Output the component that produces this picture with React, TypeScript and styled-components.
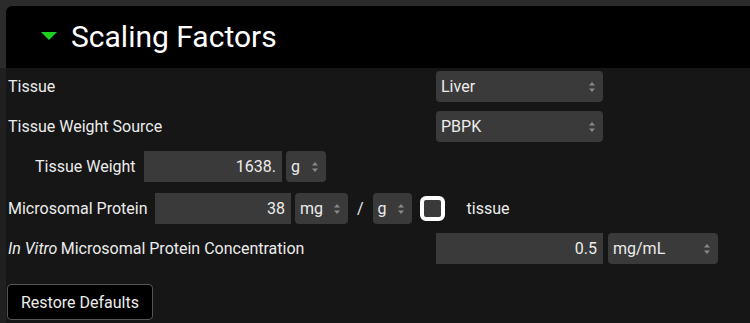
import styled, { createGlobalStyle } from 'styled-components';

const GlobalStyle = createGlobalStyle`
  html, body {
    margin: 0;
    padding: 0;
    background: linear-gradient(#2b2b2b 0, #2b2b2b 68px, #202020 68px) no-repeat;
    background-color: #202020;
    min-height: 323px;
    font-family: Roboto, "Liberation Sans", sans-serif;
  }
`;

function Spinner() {
  return (
    <svg width="8" height="14" viewBox="0 0 8 14">
      <path d="M4 2 L7 5.5 H1 Z" fill="#8a8a8a" />
      <path d="M4 12 L7 8.5 H1 Z" fill="#8a8a8a" />
    </svg>
  );
}

function Select({ value, width }: { value: string; width: number }) {
  return (
    <SelectBox $width={width}>
      <span>{value}</span>
      <Spinner />
    </SelectBox>
  );
}

function App() {
  return (
    <>
      <GlobalStyle />
      <Panel>
        <Header>
          <Caret />
          <Title>Scaling Factors</Title>
        </Header>
        <Body>
          <Row>
            <Label $width={428}>Tissue</Label>
            <Select value="Liver" width={167} />
          </Row>
          <Row>
            <Label $width={428}>Tissue Weight Source</Label>
            <Select value="PBPK" width={167} />
          </Row>
          <Row $indent={27}>
            <Label $width={109}>Tissue Weight</Label>
            <NumberBox $width={138}>1638.</NumberBox>
            <Select value="g" width={40} />
          </Row>
          <Row $top={2}>
            <Label $width={147}>Microsomal Protein</Label>
            <NumberBox $width={136}>38</NumberBox>
            <Select value="mg" width={53} />
            <Slash>/</Slash>
            <Select value="g" width={39} />
            <Check />
            <Suffix>tissue</Suffix>
          </Row>
          <Row>
            <Label $width={428}>
              <em>In Vitro</em>&#8201;Microsomal Protein Concentration
            </Label>
            <NumberBox $width={167} $gap={5}>0.5</NumberBox>
            <Select value="mg/mL" width={110} />
          </Row>
          <RestoreButton>Restore Defaults</RestoreButton>
        </Body>
      </Panel>
    </>
  );
}

export default App;

const Panel = styled.div`
  margin: 6px 0 0 6px;
  height: 317px;
  display: flex;
  flex-direction: column;
  background: #161616;
  border-top-left-radius: 6px;
  overflow: hidden;
`;

const Header = styled.div`
  height: 62px;
  flex-shrink: 0;
  display: flex;
  align-items: center;
  gap: 14px;
  padding-left: 35px;
  background: #000;
  border-radius: 6px 0 0 0;
`;

const Caret = styled.div`
  width: 0;
  height: 0;
  border-left: 8px solid transparent;
  border-right: 8px solid transparent;
  border-top: 8px solid #1fd01f;
  margin-top: -2px;
`;

const Title = styled.div`
  color: #fff;
  font-size: 30px;
  margin-top: -1px;
`;

const Body = styled.div`
  display: flex;
  flex-direction: column;
  align-items: flex-start;
  gap: 9px;
  padding: 3px 0 0 2px;
`;

const Row = styled.div<{ $indent?: number; $top?: number }>`
  display: flex;
  align-items: center;
  height: 31px;
  padding-left: ${(p) => p.$indent ?? 0}px;
  margin-top: ${(p) => p.$top ?? 0}px;
`;

const Label = styled.div<{ $width: number }>`
  width: ${(p) => p.$width}px;
  flex-shrink: 0;
  color: #ececec;
  font-size: 16px;
  white-space: nowrap;

  em {
    font-style: italic;
  }
`;

const NumberBox = styled.div<{ $width: number; $gap?: number }>`
  width: ${(p) => p.$width}px;
  height: 31px;
  box-sizing: border-box;
  display: flex;
  align-items: center;
  justify-content: flex-end;
  padding-right: 6px;
  margin-right: ${(p) => p.$gap ?? 4}px;
  background: #3a3a3a;
  color: #ececec;
  font-size: 16px;
`;

const SelectBox = styled.div<{ $width: number }>`
  width: ${(p) => p.$width}px;
  height: 31px;
  box-sizing: border-box;
  display: flex;
  align-items: center;
  justify-content: space-between;
  padding: 0 7px 0 5px;
  background: #3a3a3a;
  border-radius: 4px;
  color: #ececec;
  font-size: 16px;
`;

const Slash = styled.span`
  color: #ececec;
  font-size: 16px;
  margin: 0 9px 0 9px;
`;

const Check = styled.div`
  width: 25px;
  height: 25px;
  box-sizing: border-box;
  margin-left: 8px;
  border: 4px solid #fff;
  border-radius: 6px;
  background: #3a3a3a;
`;

const Suffix = styled.span`
  color: #ececec;
  font-size: 16px;
  margin-left: 22px;
`;

const RestoreButton = styled.button`
  margin-top: 11px;
  margin-left: -1px;
  height: 36px;
  padding: 0 13px;
  background: #000;
  color: #ececec;
  border: 1px solid #555;
  border-radius: 4px;
  font-family: Roboto, "Liberation Sans", sans-serif;
  font-size: 16px;
`;
